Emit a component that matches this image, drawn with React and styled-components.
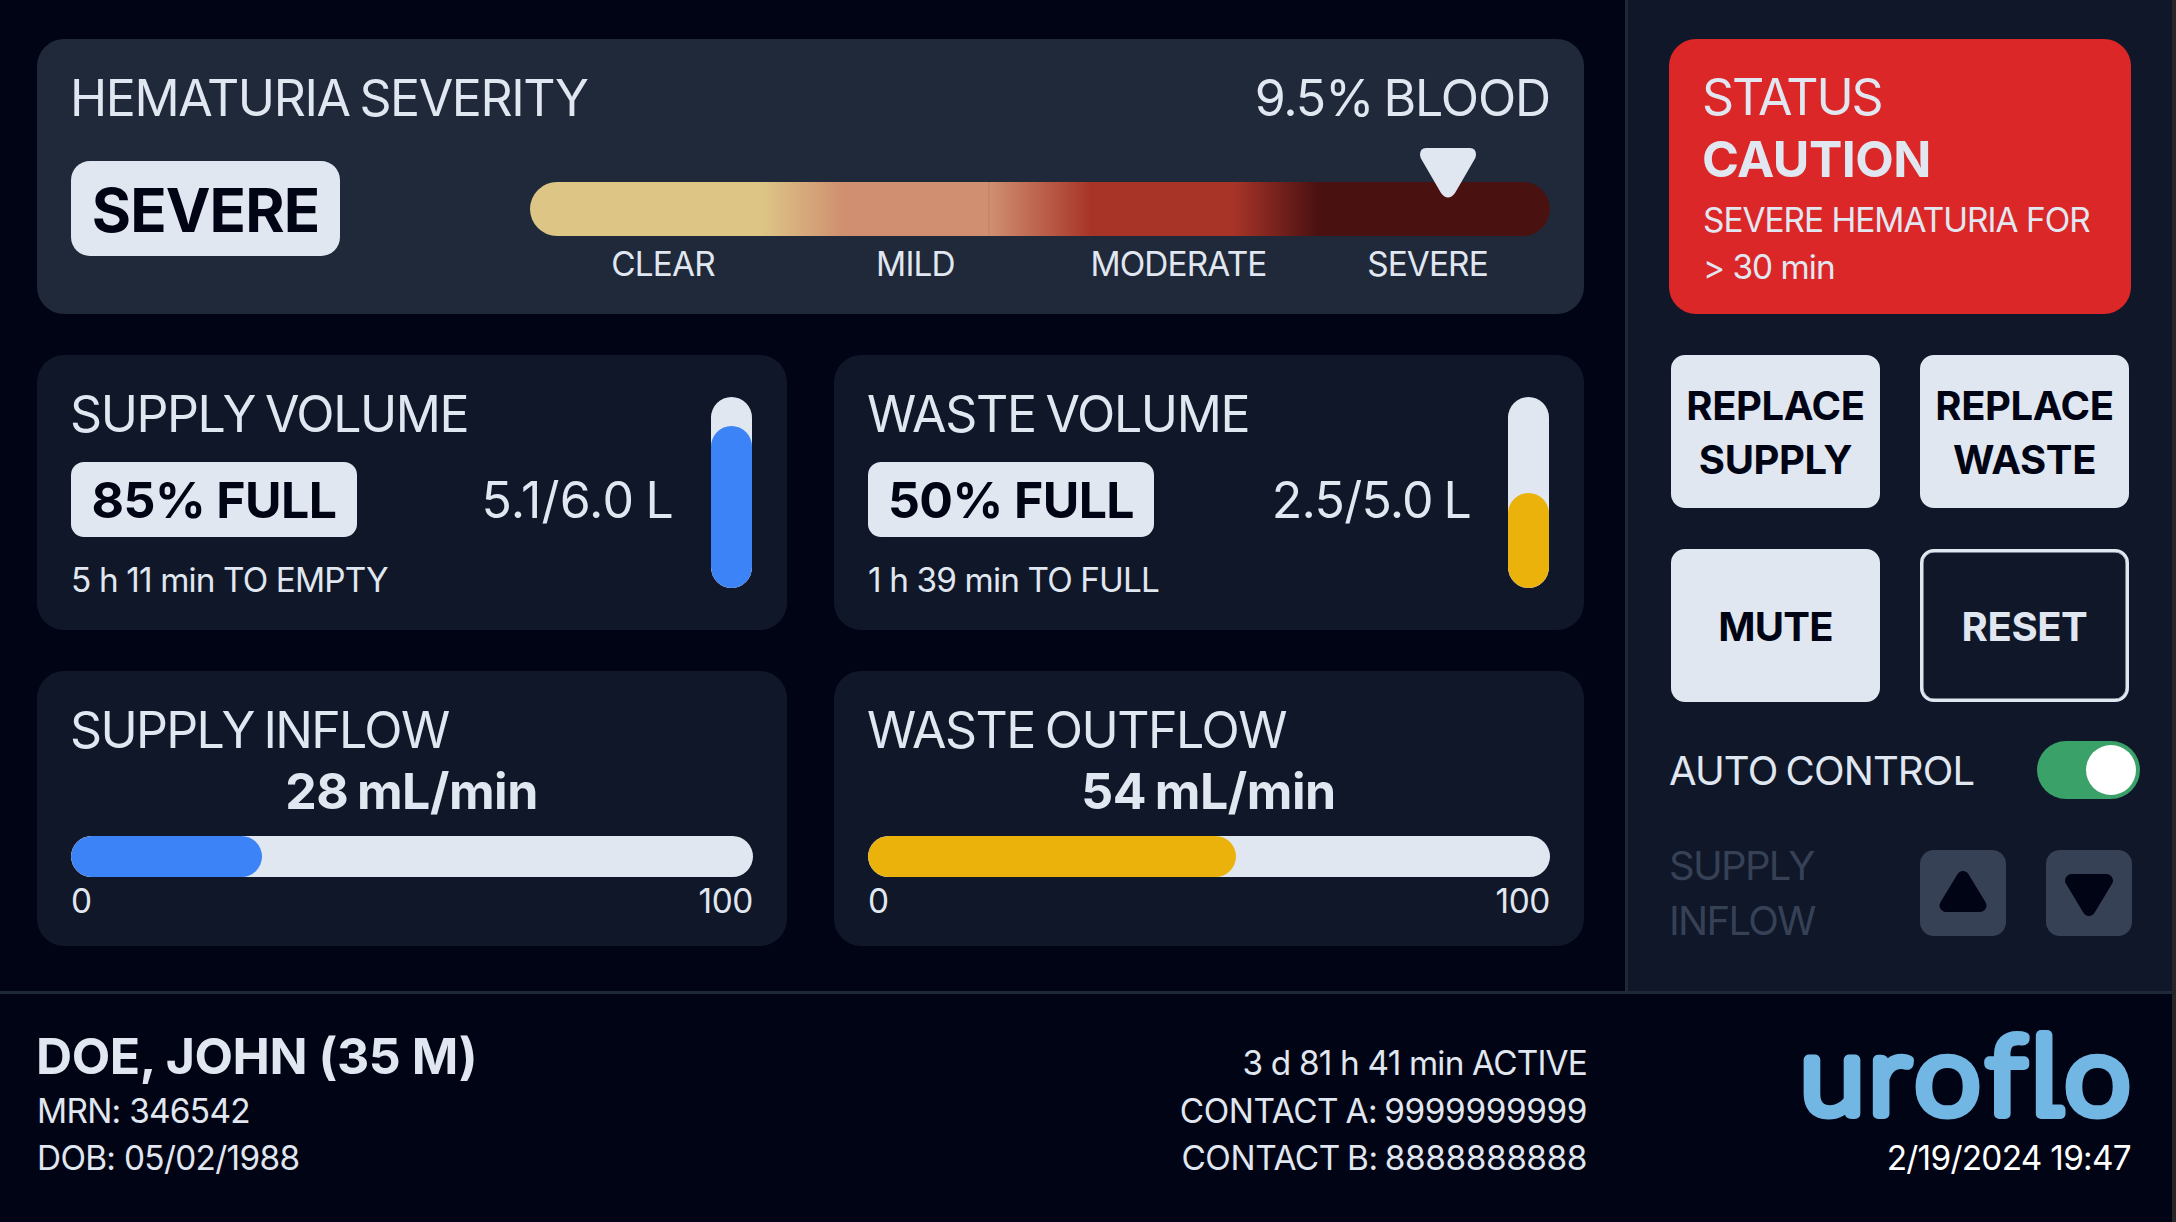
import React from "react";
import styled, { createGlobalStyle } from "styled-components";

const c = {
  bg: "#000414",
  panel: "#0f1729",
  raised: "#1f293a",
  line: "#1f2839",
  light: "#e1e7f0",
  red: "#dc2728",
  blue: "#3b83f7",
  amber: "#eab20a",
  green: "#3aa169",
  muted: "#364156",
  logo: "#72b6e3",
};

const Global = createGlobalStyle`
  *, *::before, *::after { box-sizing: border-box; }
  body { margin: 0; background: ${c.bg}; overflow: hidden; }
`;

const Screen = styled.div`
  width: 2176px;
  height: 1222px;
  border-right: 4px solid #262626;
  background: ${c.bg};
  color: ${c.light};
  font-family: Inter, "Liberation Sans", sans-serif;
  display: grid;
  grid-template-rows: 991px 231px;
  white-space: nowrap;
`;

const Upper = styled.div`
  display: grid;
  grid-template-columns: 1625px 547px;
`;

const Main = styled.main`
  padding: 39px 41px 0 37px;
  display: grid;
  grid-template-columns: 750px 750px;
  grid-template-rows: 275px 275px 275px;
  gap: 41px 47px;
`;

const Card = styled.section`
  border-radius: 27px;
  padding: 29px 34px 0;
  background: ${(p) => (p.$raised ? c.raised : c.panel)};
  grid-column: ${(p) => (p.$wide ? "1 / -1" : "auto")};
  display: ${(p) => (p.$split ? "flex" : "block")};
  justify-content: space-between;
`;

const Title = styled.div`
  margin-left: -1px;
  font-size: 50px;
  line-height: 60px;
  letter-spacing: ${(p) => -1.25 + (p.$track || 0)}px;
  word-spacing: ${(p) => (p.$loose ? 0 : "-0.055em")};
`;

const Strong = styled(Title)`
  font-weight: 700;
  text-align: ${(p) => p.$align || "left"};
  margin-top: ${(p) => p.$top || 0}px;
`;

const Small = styled.div`
  font-size: 33.33px;
  line-height: 47px;
  letter-spacing: ${(p) => -0.4 + (p.$track || 0)}px;
  word-spacing: ${(p) => (p.$loose ? 0 : "-0.055em")};
  text-align: ${(p) => p.$align || "left"};
  color: ${(p) => p.$color || "inherit"};
  margin-top: ${(p) => p.$top || 0}px;
`;

const Between = styled.div`
  display: flex;
  justify-content: space-between;
  align-items: ${(p) => p.$align || "flex-start"};
  margin-top: ${(p) => p.$top || 0}px;
`;

const Badge = styled.div`
  width: ${(p) => p.$w}px;
  height: ${(p) => p.$h}px;
  border-radius: ${(p) => p.$r}px;
  padding-top: ${(p) => p.$drop || 0}px;
  background: ${c.light};
  color: ${c.bg};
  font-size: ${(p) => p.$size}px;
  font-weight: 700;
  letter-spacing: ${(p) => p.$track}px;
  display: flex;
  align-items: center;
  justify-content: center;
`;

const Scale = styled.div`
  width: 1020px;
  padding-top: 21px;
  position: relative;
`;

const ScaleBar = styled.div`
  height: 54px;
  border-radius: 27px;
  background: linear-gradient(
    90deg,
    #ddc586 0, #ddc586 232px,
    #cf8f70 314px, #cf8f70 458px,
    #be8064 459px, #cf8f70 460px,
    #a83428 561px, #a83428 703px,
    #4a1111 788px, #4a1111 100%
  );
`;

const ScaleLabels = styled.div`
  margin-top: 5px;
  display: grid;
  grid-template-columns: 266px 239px 287px 211px;
`;

const Pointer = styled.svg`
  position: absolute;
  left: 889px;
  top: -13px;
  width: 58px;
  height: 50px;
  fill: ${c.light};
`;

const VolumeBody = styled.div`
  width: 603px;
`;

const Tank = styled.div`
  width: 41px;
  height: 191px;
  margin: 13px 1px 0 0;
  border-radius: 21px;
  background: ${c.light};
  overflow: hidden;
  display: flex;
  align-items: flex-end;
`;

const TankFill = styled.div`
  width: 100%;
  border-radius: 21px;
  background: ${(p) => p.$color};
`;

const Track = styled.div`
  height: 41px;
  margin-top: 15px;
  border-radius: 21px;
  overflow: hidden;
  background: ${c.light};
`;

const TrackFill = styled.div`
  height: 100%;
  border-radius: 21px;
  background: ${(p) => p.$color};
`;

const Sidebar = styled.aside`
  border-left: 3px solid ${c.line};
  background: ${c.panel};
  padding: 39px 41px 0;
`;

const Status = styled.section`
  height: 275px;
  border-radius: 27px;
  background: ${c.red};
  padding: 28px 34px 0;
`;

const Actions = styled.div`
  display: grid;
  grid-template-columns: 209px 209px;
  grid-auto-rows: 153px;
  gap: 41px 40px;
  margin: 41px 0 0 2px;
`;

const Action = styled.button`
  border: 3px solid ${c.light};
  border-radius: 14px;
  box-shadow: inset 0 0 0 0.5px ${c.light};
  padding: 2px 0 0;
  background: ${(p) => (p.$outline ? "transparent" : c.light)};
  color: ${(p) => (p.$outline ? c.light : c.bg)};
  font-family: inherit;
  font-size: 40px;
  line-height: 53.5px;
  font-weight: 700;
  letter-spacing: ${(p) => p.$track ?? -0.4}px;
`;

const AutoRow = styled.div`
  height: 58px;
  margin: 39px -9px 0 0;
  display: flex;
  align-items: center;
  justify-content: space-between;
  font-size: 40px;
  letter-spacing: -0.86px;
  word-spacing: -0.055em;
`;

const Switch = styled.div`
  width: 103px;
  height: 58px;
  border-radius: 29px;
  padding: 4px;
  background: ${c.green};
  display: flex;
  justify-content: flex-end;
`;

const Knob = styled.div`
  width: 50px;
  height: 50px;
  border-radius: 50%;
  background: #fff;
`;

const FlowRow = styled.div`
  margin: 39px -1px 0 0;
  display: flex;
  align-items: center;
`;

const FlowLabel = styled.div`
  flex: none;
  width: 251px;
  font-size: 40px;
  line-height: 55px;
  letter-spacing: -1.7px;
  color: ${c.muted};
`;

const Stepper = styled.div`
  flex: none;
  width: 86px;
  height: 86px;
  margin-right: ${(p) => (p.$last ? 0 : 40)}px;
  border-radius: 14px;
  background: ${c.muted};
  svg { display: block; width: 86px; height: 86px; }
`;

const Footer = styled.footer`
  border-top: 3px solid ${c.line};
  display: grid;
  grid-template-columns: 900px 687px 544px;
`;

const Patient = styled.div`
  padding: 32px 0 0 37px;
`;

const Contacts = styled.div`
  padding-top: 46px;
`;

const Brand = styled.div`
  padding-top: 25px;
  display: flex;
  flex-direction: column;
  align-items: flex-end;
`;

const Logo = styled.svg`
  width: 336px;
  height: 116px;
  overflow: visible;
`;

function Triangle({ down }) {
  return (
    <svg viewBox="0 0 86 86">
      <path
        d={down ? "M25.5 30.5 L60.5 30.5 L43 59.5 Z" : "M26 55.5 L60 55.5 L43 27.5 Z"}
        fill={c.bg}
        stroke={c.bg}
        strokeWidth="13"
        strokeLinejoin="round"
      />
    </svg>
  );
}

function Volume({ title, track, percent, amount, amountTrack, note, color }) {
  return (
    <Card $split>
      <VolumeBody>
        <Title $track={track}>{title}</Title>
        <Between $top={18} $align="center">
          <Badge $w={286} $h={75} $r={13} $size={50} $drop={1} $track={-0.6}>{percent}% FULL</Badge>
          <Title $track={amountTrack}>{amount}</Title>
        </Between>
        <Between $top={20}><Small $loose $track={-0.46}>{note}</Small></Between>
      </VolumeBody>
      <Tank>
        <TankFill $color={color} style={{ height: `${percent}%` }} />
      </Tank>
    </Card>
  );
}

function Flow({ title, track, value, color }) {
  return (
    <Card>
      <Title $track={track}>{title}</Title>
      <Strong $align="center" $top={1} $track={0.8}>{value} mL/min</Strong>
      <Track><TrackFill $color={color} style={{ width: `${value}%` }} /></Track>
      <Between $top={1}>
        <Small>0</Small>
        <Small>100</Small>
      </Between>
    </Card>
  );
}

export default function App() {
  return (
    <>
      <Global />
      <Screen>
        <Upper>
          <Main>
            <Card $raised $wide>
              <Between>
                <Title $track={-0.16}>HEMATURIA SEVERITY</Title>
                <Title $track={0.15}>9.5% BLOOD</Title>
              </Between>
              <Between $top={33}>
                <Badge $w={269} $h={95} $r={19} $size={60} $drop={3} $track={-0.9}>SEVERE</Badge>
                <Scale>
                  <ScaleBar />
                  <Pointer viewBox="0 0 58 50">
                    <path d="M7 0 H51 Q57 0 57 7 Q57 10 54 14 L36 45 Q29 54 22 45 L4 14 Q1 10 1 7 Q1 0 7 0Z" />
                  </Pointer>
                  <ScaleLabels>
                    <Small $align="center" $track={-0.4}>CLEAR</Small>
                    <Small $align="center" $track={-0.4}>MILD</Small>
                    <Small $align="center" $track={-0.45}>MODERATE</Small>
                    <Small $align="center" $track={-0.5}>SEVERE</Small>
                  </ScaleLabels>
                </Scale>
              </Between>
            </Card>
            <Volume title="SUPPLY VOLUME" track={-0.18} percent={85} amount="5.1/6.0 L" amountTrack={1.4} note="5 h 11 min TO EMPTY" color={c.blue} />
            <Volume title="WASTE VOLUME" track={-0.1} percent={50} amount="2.5/5.0 L" amountTrack={0.5} note="1 h 39 min TO FULL" color={c.amber} />
            <Flow title="SUPPLY INFLOW" track={-0.4} value={28} color={c.blue} />
            <Flow title="WASTE OUTFLOW" track={-0.23} value={54} color={c.amber} />
          </Main>
          <Sidebar>
            <Status>
              <Title $track={-0.8}>STATUS</Title>
              <Strong $top={2} $track={0.7}>CAUTION</Strong>
              <Small $loose $top={8} $track={-0.57}>SEVERE HEMATURIA FOR<br />&gt; 30 min</Small>
            </Status>
            <Actions>
              <Action>REPLACE<br />SUPPLY</Action>
              <Action>REPLACE<br />WASTE</Action>
              <Action $track={-0.8}>MUTE</Action>
              <Action $outline>RESET</Action>
            </Actions>
            <AutoRow>
              AUTO CONTROL
              <Switch><Knob /></Switch>
            </AutoRow>
            <FlowRow>
              <FlowLabel>SUPPLY<br />INFLOW</FlowLabel>
              <Stepper><Triangle /></Stepper>
              <Stepper $last><Triangle down /></Stepper>
            </FlowRow>
          </Sidebar>
        </Upper>
        <Footer>
          <Patient>
            <Strong $loose $track={0.8}>DOE, JOHN (35 M)</Strong>
            <Small $top={2} $loose $track={-0.3}>MRN: 346542</Small>
            <Small $loose $track={-0.27}>DOB: 05/02/1988</Small>
          </Patient>
          <Contacts>
            <Small $align="right" $loose $track={-0.4}>3 d 81 h 41 min ACTIVE</Small>
            <Small $align="right" $top={1}>CONTACT A: 9999999999</Small>
            <Small $align="right">CONTACT B: 8888888888</Small>
          </Contacts>
          <Brand>
            <Logo viewBox="0 0 336 116" role="img" aria-label="uroflo">
              <text
                x="4.8 67.1 109 174.1 214.8 245.4"
                y="92.8"
                transform="scale(1.1 1.02)"
                fontFamily="Lato, sans-serif"
                fontSize="106"
                fontWeight="300"
                letterSpacing="0"
                fill={c.logo}
                stroke={c.logo}
                strokeWidth="10"
                strokeLinejoin="round"
              >
                uroflo
              </text>
              <rect x="248" y="85.5" width="22.5" height="14.5" rx="5" fill={c.logo} />
            </Logo>
            <Small $color="#fff" $loose $track={-0.3}>2/19/2024 19:47</Small>
          </Brand>
        </Footer>
      </Screen>
    </>
  );
}
